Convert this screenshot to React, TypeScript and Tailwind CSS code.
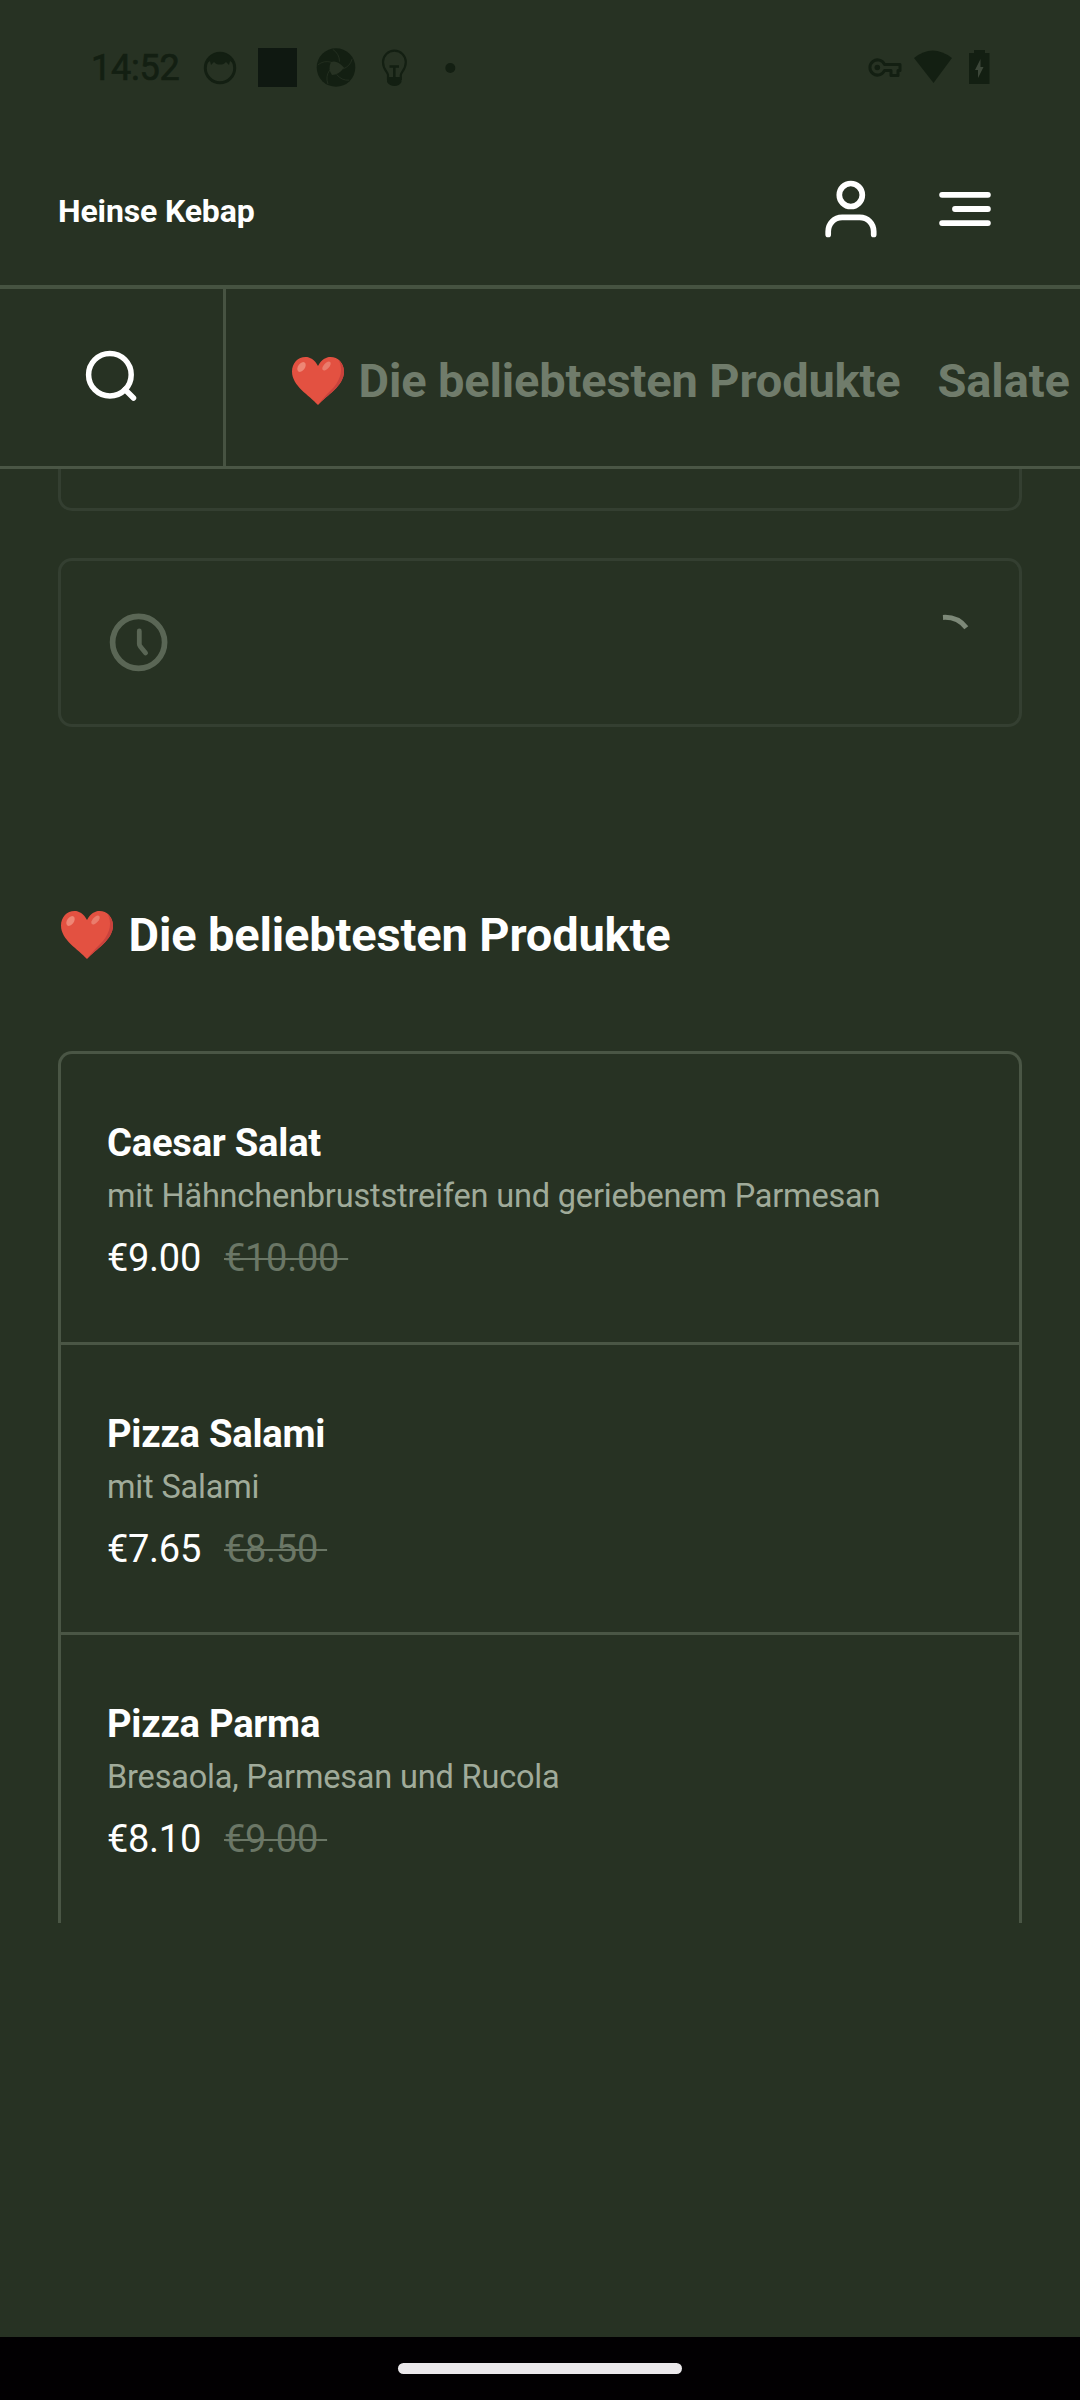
import React from "react";

const products = [
  { name: "Caesar Salat", description: "mit Hähnchenbruststreifen und geriebenem Parmesan", price: "€9.00", oldPrice: "€10.00" },
  { name: "Pizza Salami", description: "mit Salami", price: "€7.65", oldPrice: "€8.50" },
  { name: "Pizza Parma", description: "Bresaola, Parmesan und Rucola", price: "€8.10", oldPrice: "€9.00" },
];

const bladeAngles = [0, 72, 144, 216, 288];

function Heart({ className }: { className: string }) {
  return (
    <svg className={className} width="52" height="48" viewBox="0 0 52 48">
      <path d="M26 9C22.500 2.500 18 0 13.500 0 6 0 0 6 0 14.500 0 29 17 38 26 48 35 38 52 29 52 14.500 52 6 46 0 38.500 0 34 0 29.500 2.500 26 9Z" fill="#e35141" />
      <path d="M46.500 3C51 11 49.500 21 42 30 37 35 31 41 26 48 35 38 52 29 52 14.500 52 9.500 49.500 5.500 46.500 3Z" fill="#c9423c" />
      <ellipse cx="9.500" cy="10" rx="3.400" ry="5.500" transform="rotate(35 9.500 10)" fill="#ee8675" />
      <ellipse cx="34.500" cy="9" rx="2.800" ry="5.500" transform="rotate(42 34.500 9)" fill="#ea7c6c" />
    </svg>
  );
}

function StatusBar() {
  return (
    <div className="flex h-[136px] shrink-0 items-start pt-[44px] pl-[91px] text-[#131f12]">
      <span className="w-[109px] text-[36px] leading-[48px] tracking-[-0.2px] [-webkit-text-stroke:0.7px_#131f12]">14:52</span>
      <svg width="264" height="48" viewBox="200 44 264 48" fill="currentColor">
        <circle cx="220" cy="68" r="14.700" fill="none" stroke="currentColor" strokeWidth="3" />
        <path d="M206 64C208 56 214 53 220 53s12 3 14 11l-4-3-1 4-3-3c-2 2-3 2.500-6 2.500s-4-.5-6-2.500l-3 3-1-4Z" />
        <rect x="258" y="48" width="39" height="39" fill="#0f1811" />
        <circle cx="336" cy="67.500" r="19.300" />
        <path d="M331 62Q337 59.500 344 67.500 339 75 332 75 327.500 68.500 331 62Z" fill="#273223" />
        {bladeAngles.map((angle) => (
          <path key={angle} transform={`rotate(${angle} 336 67.500)`} d="M331.500 62.300Q324 60 317.800 65" fill="none" stroke="#273223" strokeWidth="0.700" />
        ))}
        <path d="M388 80v-5c0-3-5-5-5-13a11.300 11.300 0 0 1 22.800 0c0 8-5 10-5 13v5" fill="none" stroke="currentColor" strokeWidth="2.200" />
        <path d="M387 77h14.500v5q-2 4-7 4t-7.500-4Z" />
        <path d="M389.500 66.500h9.500M394.300 66v12" stroke="currentColor" strokeWidth="2.600" fill="none" />
        <circle cx="450.300" cy="68" r="5" />
      </svg>
      <svg className="ml-[400px]" width="130" height="48" viewBox="864 44 130 48" fill="currentColor">
        <path d="M884.500 64.500H900v6h-2v5h-7v-5h-6.500a7.600 7.600 0 1 1 0-6Z" fill="none" stroke="currentColor" strokeWidth="3" strokeLinejoin="round" />
        <circle cx="877.300" cy="67.500" r="2.800" />
        <path d="M914 58Q932.500 43 952 58L933.500 83Z" />
        <path d="M974 50h11v3h4.500v31h-20.500v-31h5Z" />
        <path d="M980.500 59v8h3l-5.500 11v-8h-3Z" fill="#3c4739" />
      </svg>
    </div>
  );
}

function Header() {
  return (
    <header className="flex h-[153px] shrink-0 items-start justify-between border-b-4 border-[#465341] pl-[58px] pr-[86px]">
      <span className="mt-[51px] text-[32px] font-bold leading-[48px] tracking-[-0.15px]">Heinse Kebap</span>
      <div className="mt-[40px] flex gap-[56px]">
        <svg width="58" height="66" viewBox="822 176 58 66" fill="none" stroke="#fff" strokeWidth="5.700" strokeLinecap="round">
          <circle cx="850.800" cy="195" r="11.500" />
          <path d="M828.200 234.500v-3c0-8 6-14.200 14-14.200h17.500c8 0 14 6.200 14 14.200v3" />
        </svg>
        <svg width="58" height="66" viewBox="936 176 58 66" stroke="#fff" strokeWidth="5.800" strokeLinecap="round">
          <path d="M942.100 194.800h45.800M955 209h32.900M942.100 223.100h45.800" />
        </svg>
      </div>
    </header>
  );
}

function CategoryNav() {
  return (
    <nav className="flex h-[180px] shrink-0 overflow-hidden border-b-3 border-[#4a5645]">
      <button className="w-[226px] shrink-0 border-r-3 border-[#475342] pl-[82px]">
        <svg width="60" height="60" viewBox="82 347 60 60" fill="none" stroke="#fff" strokeWidth="5.500" className="-mt-[1px]">
          <circle cx="109.900" cy="374.700" r="21.300" />
          <path d="M125 389.500 133.500 398" strokeLinecap="round" />
        </svg>
      </button>
      <div className="flex items-start whitespace-nowrap pl-[65.500px] text-[47px] font-bold leading-[60px] tracking-[-0.15px] text-[#707c6b]">
        <Heart className="mt-[68px] shrink-0" />
        <span className="mt-[62px] ml-[15px]">Die beliebtesten Produkte</span>
        <span className="mt-[62px] ml-[37px]">Salate</span>
      </div>
    </nav>
  );
}

export default function App() {
  return (
    <div className="flex h-[2400px] w-[1080px] flex-col overflow-hidden bg-[#273223] font-[Roboto,sans-serif] text-white">
      <StatusBar />
      <Header />
      <CategoryNav />
      <main className="flex grow flex-col px-[58px]">
        <div className="h-[42px] rounded-b-[14px] border-3 border-t-0 border-[#343f31]" />
        <section className="mt-[47px] flex h-[169px] items-start justify-between rounded-[14px] border-3 border-[#343f31] pl-[45px] pr-[46px]">
          <svg className="mt-[48px]" width="66" height="66" viewBox="106 609 66 66" fill="none" stroke="#5a6655" strokeLinecap="round" strokeLinejoin="round">
            <circle cx="138.600" cy="642.300" r="26" strokeWidth="5.700" />
            <path d="M139.300 631v13q0 1 1 2.500l5.300 6.500" strokeWidth="4.800" />
          </svg>
          <svg className="mt-[48px]" width="66" height="66" viewBox="907 609 66 66" fill="none" stroke="#7d8978" strokeWidth="5">
            <path d="M943 617.400Q957.500 616.500 966.300 627.700" />
          </svg>
        </section>
        <div className="mt-[178px] flex items-start pl-[3px] text-[47px] font-bold leading-[60px] tracking-[-0.15px]">
          <Heart className="mt-[6px] shrink-0" />
          <h1 className="ml-[15.500px]">Die beliebtesten Produkte</h1>
        </div>
        <ul className="mt-[86px] flex h-[872px] flex-col rounded-t-[14px] border-3 border-b-0 border-[#4a5645]">
          {products.map((p) => (
            <li key={p.name} className="h-[290.500px] shrink-0 border-b-3 border-[#4a5645] pl-[46px] pt-[65px] last:border-b-0">
              <h2 className="text-[38.200px] font-bold leading-[48px] tracking-[-0.25px]">{p.name}</h2>
              <p className="mt-[5px] text-[32.500px] leading-[48px] tracking-[-0.18px] text-[#a0ab9a]">{p.description}</p>
              <p className="mt-[14px] flex text-[38px] leading-[48px] tracking-[-0.3px]">
                <span className="w-[117px]">{p.price}</span>
                <s className="text-[#6b7766] decoration-[2px]">{p.oldPrice}&nbsp;</s>
              </p>
            </li>
          ))}
        </ul>
      </main>
      <footer className="flex h-[63px] shrink-0 items-start justify-center bg-[#020002] pt-[26px]">
        <div className="h-[11px] w-[284px] rounded-full bg-[#ebe8eb]" />
      </footer>
    </div>
  );
}
